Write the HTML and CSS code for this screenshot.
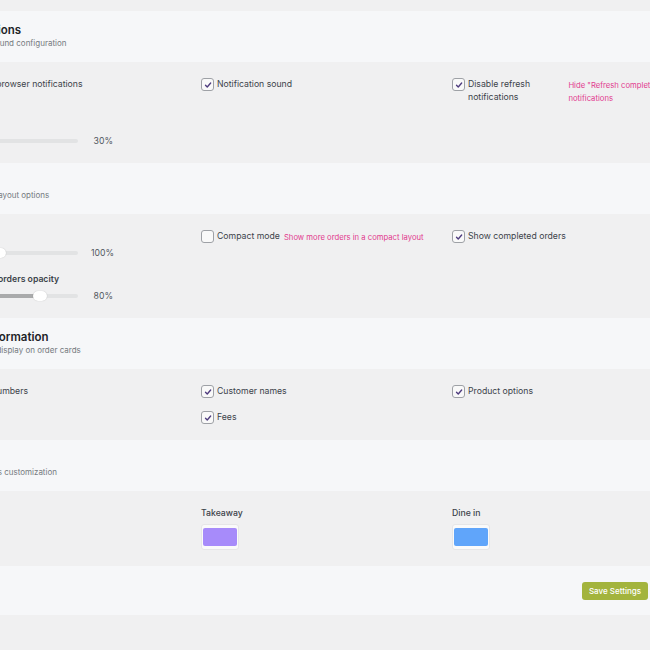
FILE: index.html
```html
<!DOCTYPE html>
<html lang="en">
<head>
    <meta charset="UTF-8">
    <meta name="viewport" content="width=device-width, initial-scale=1.0">
    <title>Order Board Settings</title>
    <link rel="stylesheet" href="styles.css">
</head>
<body>
    <div class="page">
        <!-- Notifications -->
        <section class="panel">
            <div class="panel-head">
                <h2>Notifications</h2>
                <p>Alerts and sound configuration</p>
            </div>
            <div class="panel-body">
                <div class="col">
                    <label class="check">
                        <span class="box"></span>
                        <span class="check-text">Enable browser notifications</span>
                    </label>
                    <div class="field field-gap">
                        <div class="field-label">Volume</div>
                        <div class="range">
                            <div class="track"><div class="fill" style="width: 3%"></div><div class="thumb" style="left: 3%"></div></div>
                            <span class="range-value">30%</span>
                        </div>
                    </div>
                </div>
                <div class="col">
                    <label class="check">
                        <span class="box checked"><svg viewBox="0 0 12 12"><path d="M3 6.2l2.1 2.2L9.2 3.6"/></svg></span>
                        <span class="check-text">Notification sound</span>
                    </label>
                </div>
                <div class="col">
                    <label class="check">
                        <span class="box checked"><svg viewBox="0 0 12 12"><path d="M3 6.2l2.1 2.2L9.2 3.6"/></svg></span>
                        <span class="check-text">Disable refresh notifications</span>
                        <span class="hint">Hide "Refresh completed" notifications</span>
                    </label>
                </div>
            </div>
        </section>

        <!-- Display -->
        <section class="panel">
            <div class="panel-head">
                <h2>Display</h2>
                <p>Display and layout options</p>
            </div>
            <div class="panel-body">
                <div class="col">
                    <div class="field">
                        <div class="field-label">Font size</div>
                        <div class="range">
                            <div class="track"><div class="fill" style="width: 38%"></div><div class="thumb" style="left: 38%"></div></div>
                            <span class="range-value">100%</span>
                        </div>
                    </div>
                    <div class="field">
                        <div class="field-label">Completed orders opacity</div>
                        <div class="range">
                            <div class="track"><div class="fill" style="width: 70%"></div><div class="thumb" style="left: 70%"></div></div>
                            <span class="range-value">80%</span>
                        </div>
                    </div>
                </div>
                <div class="col">
                    <label class="check">
                        <span class="box"></span>
                        <span class="check-text">Compact mode</span>
                        <span class="hint">Show more orders in a compact layout</span>
                    </label>
                </div>
                <div class="col">
                    <label class="check">
                        <span class="box checked"><svg viewBox="0 0 12 12"><path d="M3 6.2l2.1 2.2L9.2 3.6"/></svg></span>
                        <span class="check-text">Show completed orders</span>
                    </label>
                </div>
            </div>
        </section>

        <!-- Order information -->
        <section class="panel">
            <div class="panel-head">
                <h2>Order information</h2>
                <p>Elements to display on order cards</p>
            </div>
            <div class="panel-body">
                <div class="col">
                    <label class="check">
                        <span class="box checked"><svg viewBox="0 0 12 12"><path d="M3 6.2l2.1 2.2L9.2 3.6"/></svg></span>
                        <span class="check-text">Order numbers</span>
                    </label>
                </div>
                <div class="col">
                    <label class="check">
                        <span class="box checked"><svg viewBox="0 0 12 12"><path d="M3 6.2l2.1 2.2L9.2 3.6"/></svg></span>
                        <span class="check-text">Customer names</span>
                    </label>
                    <label class="check">
                        <span class="box checked"><svg viewBox="0 0 12 12"><path d="M3 6.2l2.1 2.2L9.2 3.6"/></svg></span>
                        <span class="check-text">Fees</span>
                    </label>
                </div>
                <div class="col">
                    <label class="check">
                        <span class="box checked"><svg viewBox="0 0 12 12"><path d="M3 6.2l2.1 2.2L9.2 3.6"/></svg></span>
                        <span class="check-text">Product options</span>
                    </label>
                </div>
            </div>
        </section>

        <!-- Colors -->
        <section class="panel">
            <div class="panel-head">
                <h2>Colors</h2>
                <p>Service types customization</p>
            </div>
            <div class="panel-body">
                <div class="col color-field">
                    <div class="field-label">Delivery</div>
                    <span class="swatch"><span class="swatch-color delivery"></span></span>
                </div>
                <div class="col color-field">
                    <div class="field-label">Takeaway</div>
                    <span class="swatch"><span class="swatch-color takeaway"></span></span>
                </div>
                <div class="col color-field">
                    <div class="field-label">Dine in</div>
                    <span class="swatch"><span class="swatch-color dine-in"></span></span>
                </div>
            </div>
        </section>

        <div class="footer">
            <button class="save-button">Save Settings</button>
        </div>
    </div>
</body>
</html>
```

FILE: styles.css
```css
html, body {
    overflow: hidden;
}
body {
    margin: 0;
    background-color: #f0f0f1;
    font-family: Inter, "Open Sans", sans-serif;
    font-size: 8.7px;
    color: #3c434a;
}
.page {
    margin-left: -66px; /* la pagina esta desplazada a la izquierda */
    width: 716px;
    padding-top: 11px;
}
.panel-head {
    background-color: #f6f7f9;
    padding: 12px 16px 12px;
}
.panel-head h2 {
    margin: 0;
    font-size: 11.5px;
    font-weight: 600;
    color: #1d2327;
    line-height: 14px;
}
.panel-head p {
    margin: 0;
    color: #757a80;
    line-height: 13px;
    font-size: 8px;
}
.panel-body {
    display: grid;
    grid-template-columns: repeat(3, 235px);
    column-gap: 16px;
    padding: 16px;
}
.col {
    display: flex;
    flex-direction: column;
    align-items: flex-start;
    gap: 13px;
    min-width: 0;
}
.check {
    display: flex;
    align-items: flex-start;
    gap: 3px;
    line-height: 13px;
    max-width: 100%;
}
.box {
    flex: none;
    width: 11px;
    height: 11px;
    border: 1px solid #9ea1a6;
    border-radius: 3px;
    background-color: #f9f9f9;
    display: flex;
    align-items: center;
    justify-content: center;
}
.box svg {
    width: 10px;
    height: 10px;
    fill: none;
    stroke: #4e3b7e;
    stroke-width: 1.6;
    stroke-linecap: round;
    stroke-linejoin: round;
}
.check-text {
    flex: 0 1 auto;
}
.hint {
    flex: 0 1 auto;
    margin-left: 1px;
    color: #e23b8f;
    font-size: 7.7px;
    padding-top: 1px;
}
.field {
    display: flex;
    flex-direction: column;
    gap: 5px;
}
.field + .field {
    margin-top: 1px;
}
.field-gap {
    margin-top: 14px;
}
.field-label {
    font-weight: 600;
    line-height: 12px;
    color: #3c434a;
}
.range {
    display: flex;
    align-items: center;
    height: 12px;
}
.track {
    position: relative;
    width: 128px;
    height: 4px;
    border-radius: 2px;
    background-color: #e2e3e4;
}
.fill {
    height: 100%;
    border-radius: 2px;
    background-color: #a9aaab;
}
.thumb {
    position: absolute;
    top: -3px;
    width: 14px;
    height: 10px;
    margin-left: -7px;
    border-radius: 5px;
    background-color: #ffffff;
    box-shadow: 0 0 1px rgba(0, 0, 0, 0.25);
}
.range-value {
    min-width: 22px;
    margin-left: 13px;
    text-align: right;
    color: #50575e;
}
.color-field {
    gap: 5px;
}
.color-field .field-label {
    font-weight: 500;
}
.swatch {
    display: flex;
    padding: 3px 1px;
    border: 1px solid #e6e6e7;
    border-radius: 3px;
    background-color: #fafafa;
}
.swatch-color {
    width: 34px;
    height: 18px;
    border-radius: 2px;
}
.delivery {
    background-color: #f59e0b;
}
.takeaway {
    background-color: #a78bfa;
}
.dine-in {
    background-color: #60a5fa;
}
.footer {
    display: flex;
    justify-content: flex-end;
    background-color: #f6f7f9;
    padding: 16px 2px 15px;
}
.save-button {
    background-color: #a3b43d;
    color: #ffffff;
    border: none;
    border-radius: 3px;
    padding: 0 7px;
    height: 18px;
    font-family: Inter, "Open Sans", sans-serif;
    font-size: 8px;
    font-weight: 500;
    cursor: pointer;
}
```
